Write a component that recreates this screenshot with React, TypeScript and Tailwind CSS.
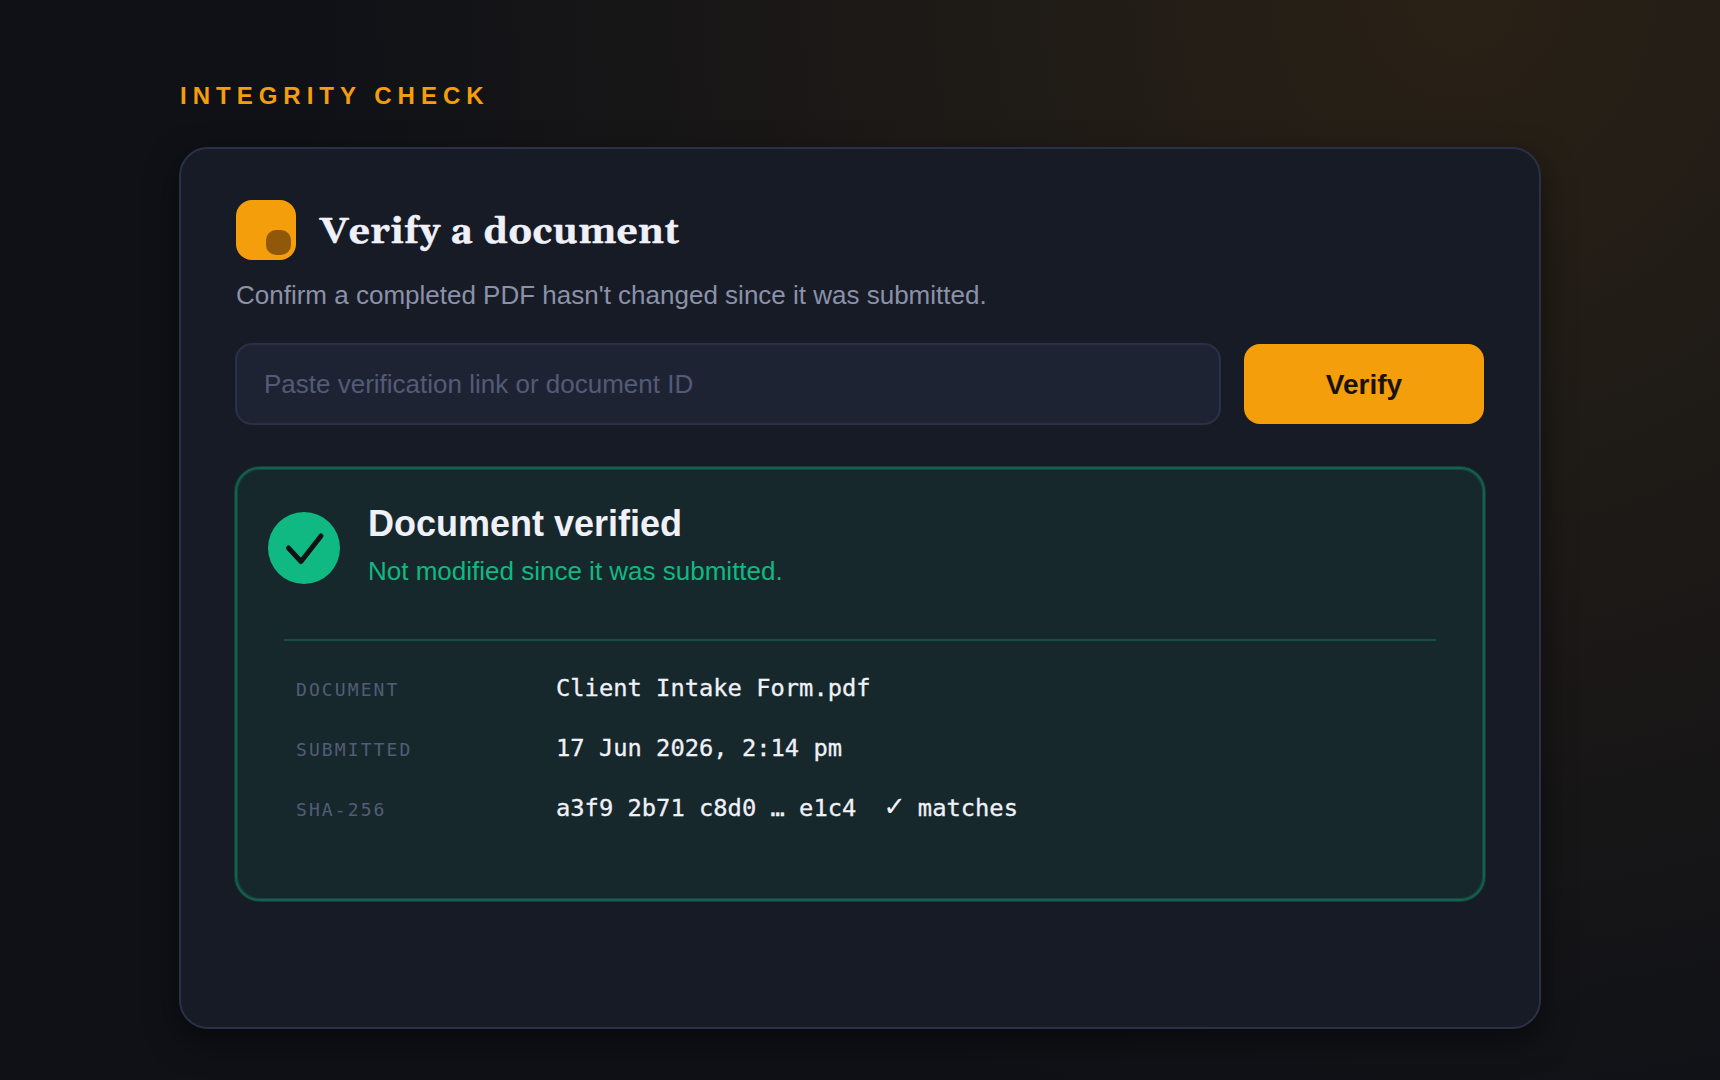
import { useState } from "react";

const details = [
  { label: "DOCUMENT", value: "Client Intake Form.pdf" },
  { label: "SUBMITTED", value: "17 Jun 2026, 2:14 pm" },
  { label: "SHA-256", value: "a3f9 2b71 c8d0 … e1c4", matches: true },
];

const Logo = () => (
  <div className="flex h-[60px] w-[60px] items-end justify-end rounded-[16px] bg-[#f59e0b] p-[5px]">
    <div className="h-[25px] w-[25px] rounded-[10px] bg-[#92580a]" />
  </div>
);

const CheckBadge = () => (
  <svg className="mt-[8px] h-[72px] w-[72px] shrink-0" viewBox="0 0 72 72" fill="none">
    <circle cx="36" cy="36" r="36" fill="#10b981" />
    <path
      d="M20.5 36L33 49.5L53 24"
      stroke="#0f1117"
      strokeWidth="5"
      strokeLinecap="round"
      strokeLinejoin="round"
    />
  </svg>
);

const Result = () => (
  <div className="-mx-px mt-[42px] h-[434px] rounded-[25px] border-2 border-[#14614f] bg-[#17282c] bg-clip-padding shadow-[0_0_0_1px_rgba(20,97,79,0.5),inset_0_0_0_1px_rgba(20,97,79,0.5)]">
    <div className="flex items-start gap-[28px] pl-[31px] pt-[35px]">
      <CheckBadge />
      <div>
        <h2 className="text-[36px] font-bold leading-[40px] text-[#f0f1f8]">Document verified</h2>
        <p className="mt-[11px] text-[26px] leading-[32px] text-[#10b981]">
          Not modified since it was submitted.
        </p>
      </div>
    </div>
    <div className="mx-[47px] mt-[52px] h-[2px] bg-[#164e43]" />
    <dl className="ml-[59px] mt-[17px] font-[Consolas,'DejaVu_Sans_Mono',monospace]">
      {details.map(({ label, value, matches }) => (
        <div key={label} className="flex h-[60px] items-baseline pt-[14px]">
          <dt className="w-[260px] text-[18px] leading-[32px] tracking-[2.1px] text-[#535c77]">{label}</dt>
          <dd className="whitespace-pre text-[23.75px] leading-[32px] text-[#f0f1f8] [-webkit-text-stroke:0.3px_#f0f1f8]">
            {value}
            {matches && (
              <>
                {"  "}
                <span className="text-[31px] leading-[10px] [-webkit-text-stroke:0px]">✓</span>
                {" matches"}
              </>
            )}
          </dd>
        </div>
      ))}
    </dl>
  </div>
);

const App = () => {
  const [query, setQuery] = useState("");

  return (
    <main className="h-[1080px] w-[1720px] overflow-hidden bg-[#0f1117] bg-[radial-gradient(circle_at_85%_0%,rgba(245,158,11,0.115),rgba(245,158,11,0)_1180px)] px-[179px] pt-[82px] font-['Liberation_Sans',Arial,sans-serif]">
      <p className="ml-px text-[24px] font-bold leading-[28px] tracking-[6px] text-[#f59e0b]">
        INTEGRITY CHECK
      </p>
      <section className="mt-[37px] h-[882px] rounded-[29px] border-2 border-[#2a3045] bg-[#171b26] px-[55px] pt-[51px] shadow-[0_12px_32px_rgba(0,0,0,0.5)]">
        <div className="flex items-center gap-[24px]">
          <Logo />
          <h1 className="whitespace-nowrap pt-[5px] font-[Georgia,Gelasio,'DejaVu_Serif',serif] text-[37px] font-bold leading-[44px] tracking-[0.6px] text-[#f0f1f8] [-webkit-text-stroke:0.5px_#f0f1f8]">
            Verify a document
          </h1>
        </div>
        <p className="mt-[19px] text-[26px] leading-[32px] text-[#8b91a9]">
          Confirm a completed PDF hasn't changed since it was submitted.
        </p>
        <form
          className="-mx-px mt-[32px] flex items-center gap-[23px]"
          onSubmit={(e) => e.preventDefault()}
        >
          <input
            className="h-[82px] w-[986px] rounded-[17px] border-2 border-[#2a3045] bg-[#1e2333] px-[27px] text-[26px] text-[#f0f1f8] placeholder:text-[#535b76]"
            value={query}
            onChange={(e) => setQuery(e.target.value)}
            placeholder="Paste verification link or document ID"
          />
          <button className="h-[80px] w-[240px] rounded-[16px] bg-[#f59e0b] pt-px text-[28px] font-bold text-[#1a1208]">
            Verify
          </button>
        </form>
        <Result />
      </section>
    </main>
  );
};

export default App;
